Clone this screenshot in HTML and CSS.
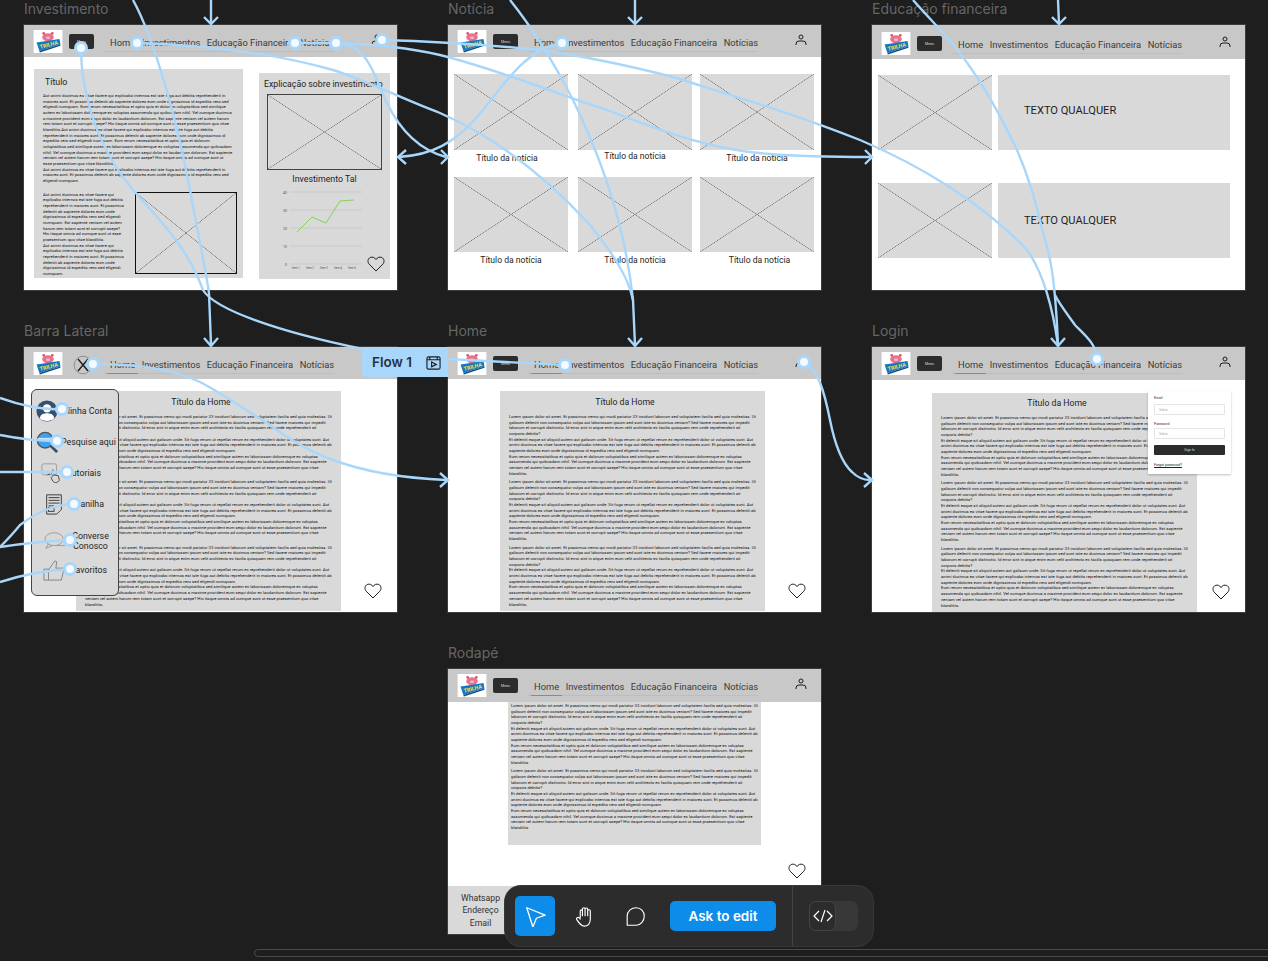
FILE: index.html
```html
<!DOCTYPE html>
<html lang="pt-BR">
<head>
<meta charset="utf-8">
<title>Wireframes</title>
<link rel="stylesheet" href="styles.css">
</head>
<body>
<svg class="defs" width="0" height="0" aria-hidden="true">
  <symbol id="logo" viewBox="0 0 30 24">
    <rect width="30" height="24" fill="#fff"/>
    <ellipse cx="15" cy="7.5" rx="6" ry="4.200" fill="#e8738f"/>
    <circle cx="10.500" cy="3.500" r="1.400" fill="#d9536f"/>
    <circle cx="19.500" cy="3.500" r="1.400" fill="#d9536f"/>
    <ellipse cx="15" cy="8" rx="2.200" ry="1.300" fill="#f7b6c4"/>
    <path d="M3 13 27 9.500 28 15 6 22Z" fill="#1479c4"/>
    <path d="M6 22 28 15 28 16.500 6.500 23.500Z" fill="#0b4c80"/>
    <text x="7" y="19.500" class="logo-text" transform="rotate(-14 7 19.500)">TRILHA</text>
  </symbol>
  <symbol id="user" viewBox="0 0 12 12">
    <circle cx="6" cy="3" r="2" fill="none" stroke="#1e1e1e" stroke-width="1"/>
    <path d="M1 11V10Q1 7 4 7H8Q11 7 11 10V11" fill="none" stroke="#1e1e1e" stroke-width="1"/>
  </symbol>
  <symbol id="heart" viewBox="0 0 18 16">
    <path d="M9 15 2.200 8.200C.2 6 .8 2.600 3.200 1.500 5.400.6 7.800 1.400 9 3.600 10.200 1.400 12.600.6 14.800 1.500 17.200 2.600 17.800 6 15.800 8.200Z" fill="none" stroke="#1e1e1e" stroke-width="1"/>
  </symbol>
</svg>

<main class="canvas">
  <section class="slot">
    <h2 class="slot-name">Investimento</h2>
    <div class="frame">
      <header class="bar">
        <svg class="logo"><use href="#logo"/></svg>
        <button class="menu">Menu</button>
        <nav class="nav"><a>Home</a><a>Investimentos</a><a>Educação Financeira</a><a>Notícias</a></nav>
        <svg class="user"><use href="#user"/></svg>
      </header>
      <div class="inv-body">
        <article class="inv-left">
          <h3 class="inv-title">Título</h3>
          <p class="tiny">Aut animi ducimus ea vitae facere qui explicabo internos est iste fuga aut debitis reprehenderit in maiores sunt. Et possimus deleniti ab sapiente dolores eum unde dignissimos id expedita vero sed eligendi numquam. Eum rerum necessitatibus et optio quis et dolorum voluptatibus sed similique autem ex laboriosam doloremque ex voluptas assumenda qui quibusdam nihil. Vel cumque ducimus a maxime provident eum sequi dolor ex laudantium dolorum. Est sapiente veniam vel autem harum rem totam sunt et corrupti saepe? Hic itaque omnis ad cumque sunt ut esse praesentium quo vitae blanditiis.Aut animi ducimus ea vitae facere qui explicabo internos est iste fuga aut debitis reprehenderit in maiores sunt. Et possimus deleniti ab sapiente dolores eum unde dignissimos id expedita vero sed eligendi numquam. Eum rerum necessitatibus et optio quis et dolorum voluptatibus sed similique autem ex laboriosam doloremque ex voluptas assumenda qui quibusdam nihil. Vel cumque ducimus a maxime provident eum sequi dolor ex laudantium dolorum. Est sapiente veniam vel autem harum rem totam sunt et corrupti saepe? Hic itaque omnis ad cumque sunt ut esse praesentium quo vitae blanditiis.<br>Aut animi ducimus ea vitae facere qui explicabo internos est iste fuga aut debitis reprehenderit in maiores sunt. Et possimus deleniti ab sapiente dolores eum unde dignissimos id expedita vero sed eligendi numquam.</p>
          <div class="inv-split">
            <p class="tiny inv-col">Aut animi ducimus ea vitae facere qui explicabo internos est iste fuga aut debitis reprehenderit in maiores sunt. Et possimus deleniti ab sapiente dolores eum unde dignissimos id expedita vero sed eligendi numquam. Est sapiente veniam vel autem harum rem totam sunt et corrupti saepe? Hic itaque omnis ad cumque sunt ut esse praesentium quo vitae blanditiis.<br>Aut animi ducimus ea vitae facere qui explicabo internos est iste fuga aut debitis reprehenderit in maiores sunt. Et possimus deleniti ab sapiente dolores eum unde dignissimos id expedita vero sed eligendi numquam.</p>
            <div class="ph inv-img"></div>
          </div>
        </article>
        <aside class="inv-right">
          <h3 class="inv-sub">Explicação sobre investimento</h3>
          <div class="ph inv-pic"></div>
          <h3 class="inv-chart-title">Investimento Tal</h3>
          <svg class="chart" viewBox="0 0 131 90">
            <g class="grid"><path d="M31 3H103M31 21H103M31 39H103M31 57H103M31 75H103"/></g>
            <g class="axis">
              <text x="28" y="4.500">40</text><text x="28" y="22.500">30</text><text x="28" y="40.500">20</text><text x="28" y="58.500">10</text><text x="28" y="76.500">0</text>
            </g>
            <g class="ticks">
              <text x="33" y="80">Item 1</text><text x="47" y="80">Item 2</text><text x="61" y="80">Item 3</text><text x="75" y="80">Item 4</text><text x="89" y="80">Item 5</text>
            </g>
            <path class="series" d="M38 43 53 28 67 34 81 12 95 11"/>
          </svg>
        </aside>
      </div>
      <svg class="heart heart-inv"><use href="#heart"/></svg>
    </div>
  </section>

  <section class="slot">
    <h2 class="slot-name">Notícia</h2>
    <div class="frame">
      <header class="bar">
        <svg class="logo"><use href="#logo"/></svg>
        <button class="menu">Menu</button>
        <nav class="nav"><a>Home</a><a>Investimentos</a><a>Educação Financeira</a><a>Notícias</a></nav>
        <svg class="user"><use href="#user"/></svg>
      </header>
      <div class="news">
        <figure class="card"><div class="ph news-img"></div><figcaption class="cap cap-left">Título da notícia</figcaption></figure>
        <figure class="card"><div class="ph news-img"></div><figcaption class="cap cap-up">Título da notícia</figcaption></figure>
        <figure class="card"><div class="ph news-img"></div><figcaption class="cap">Título da notícia</figcaption></figure>
        <figure class="card"><div class="ph news-img news-img-short"></div><figcaption class="cap">Título da notícia</figcaption></figure>
        <figure class="card"><div class="ph news-img news-img-short"></div><figcaption class="cap">Título da notícia</figcaption></figure>
        <figure class="card"><div class="ph news-img news-img-short"></div><figcaption class="cap cap-right">Título da notícia</figcaption></figure>
      </div>
    </div>
  </section>

  <section class="slot">
    <h2 class="slot-name">Educação financeira</h2>
    <div class="frame">
      <header class="bar bar-low">
        <svg class="logo"><use href="#logo"/></svg>
        <button class="menu">Menu</button>
        <nav class="nav"><a>Home</a><a>Investimentos</a><a>Educação Financeira</a><a>Notícias</a></nav>
        <svg class="user"><use href="#user"/></svg>
      </header>
      <div class="edu">
        <div class="ph edu-img"></div><div class="edu-text edu-text-high">TEXTO QUALQUER</div>
        <div class="ph edu-img"></div><div class="edu-text">TEXTO QUALQUER</div>
      </div>
    </div>
  </section>

  <section class="slot">
    <h2 class="slot-name">Barra Lateral</h2>
    <div class="frame">
      <header class="bar">
        <svg class="logo"><use href="#logo"/></svg>
        <svg class="close" viewBox="0 0 20 20"><circle cx="10" cy="10" r="8.800"/><path d="M5 4 15 16M15 4 5 16"/></svg>
        <nav class="nav nav-after-close"><a class="on">Home</a><a>Investimentos</a><a>Educação Financeira</a><a>Notícias</a></nav>
      </header>
      <article class="page">
        <h3 class="page-title">Título da Home</h3>
        <p class="tiny para">Lorem ipsum dolor sit amet. Et possimus nemo qui modi pariatur 33 incidunt laborum sed voluptatem facilis sed quia molestias. Ut galisum deleniti non consequatur culpa aut laboriosam ipsum sed sunt iste ex ducimus veniam? Sed facere maiores qui impedit laborum et corrupti distinctio. Id error sint in atque enim eum velit architecto ex facilis quisquam rem unde reprehenderit sit corporis debitis?<br>Et deleniti eaque sit aliquid autem aut galisum unde. Sit fuga rerum ut repellat rerum ex reprehenderit dolor ut voluptates sunt. Aut animi ducimus ea vitae facere qui explicabo internos est iste fuga aut debitis reprehenderit in maiores sunt. Et possimus deleniti ab sapiente dolores eum unde dignissimos id expedita vero sed eligendi numquam.<br>Eum rerum necessitatibus et optio quis et dolorum voluptatibus sed similique autem ex laboriosam doloremque ex voluptas assumenda qui quibusdam nihil. Vel cumque ducimus a maxime provident eum sequi dolor ex laudantium dolorum. Est sapiente veniam vel autem harum rem totam sunt et corrupti saepe? Hic itaque omnis ad cumque sunt ut esse praesentium quo vitae blanditiis.</p>
        <p class="tiny para">Lorem ipsum dolor sit amet. Et possimus nemo qui modi pariatur 33 incidunt laborum sed voluptatem facilis sed quia molestias. Ut galisum deleniti non consequatur culpa aut laboriosam ipsum sed sunt iste ex ducimus veniam? Sed facere maiores qui impedit laborum et corrupti distinctio. Id error sint in atque enim eum velit architecto ex facilis quisquam rem unde reprehenderit sit corporis debitis?<br>Et deleniti eaque sit aliquid autem aut galisum unde. Sit fuga rerum ut repellat rerum ex reprehenderit dolor ut voluptates sunt. Aut animi ducimus ea vitae facere qui explicabo internos est iste fuga aut debitis reprehenderit in maiores sunt. Et possimus deleniti ab sapiente dolores eum unde dignissimos id expedita vero sed eligendi numquam.<br>Eum rerum necessitatibus et optio quis et dolorum voluptatibus sed similique autem ex laboriosam doloremque ex voluptas assumenda qui quibusdam nihil. Vel cumque ducimus a maxime provident eum sequi dolor ex laudantium dolorum. Est sapiente veniam vel autem harum rem totam sunt et corrupti saepe? Hic itaque omnis ad cumque sunt ut esse praesentium quo vitae blanditiis.</p>
        <p class="tiny para">Lorem ipsum dolor sit amet. Et possimus nemo qui modi pariatur 33 incidunt laborum sed voluptatem facilis sed quia molestias. Ut galisum deleniti non consequatur culpa aut laboriosam ipsum sed sunt iste ex ducimus veniam? Sed facere maiores qui impedit laborum et corrupti distinctio. Id error sint in atque enim eum velit architecto ex facilis quisquam rem unde reprehenderit sit corporis debitis?<br>Et deleniti eaque sit aliquid autem aut galisum unde. Sit fuga rerum ut repellat rerum ex reprehenderit dolor ut voluptates sunt. Aut animi ducimus ea vitae facere qui explicabo internos est iste fuga aut debitis reprehenderit in maiores sunt. Et possimus deleniti ab sapiente dolores eum unde dignissimos id expedita vero sed eligendi numquam.<br>Eum rerum necessitatibus et optio quis et dolorum voluptatibus sed similique autem ex laboriosam doloremque ex voluptas assumenda qui quibusdam nihil. Vel cumque ducimus a maxime provident eum sequi dolor ex laudantium dolorum. Est sapiente veniam vel autem harum rem totam sunt et corrupti saepe? Hic itaque omnis ad cumque sunt ut esse praesentium quo vitae blanditiis.</p>
      </article>
      <svg class="heart heart-page"><use href="#heart"/></svg>
      <aside class="side">
        <div class="side-row">
          <svg class="side-ico" viewBox="0 0 24 24"><circle cx="12" cy="12" r="11.500" fill="#36506f"/><circle cx="12" cy="9" r="4.500" fill="#fff"/><path d="M4 20C5 15 9 14.500 12 14.500S19 15 20 20C16 24 8 24 4 20Z" fill="#fff"/></svg>
          <span class="side-label">Minha Conta</span>
        </div>
        <div class="side-row">
          <svg class="side-ico" viewBox="0 0 24 24"><circle cx="10" cy="10" r="8.500" fill="#3ea2f2" stroke="#555" stroke-width="1.500"/><path d="M2 9H18" stroke="#cfe9ff" stroke-width="3"/><path d="M16 16 23 23" stroke="#36506f" stroke-width="3"/></svg>
          <span class="side-label">Pesquise aqui</span>
        </div>
        <div class="side-row side-row-short">
          <svg class="side-ico" viewBox="0 0 24 24" fill="none" stroke="#888" stroke-width=".8"><rect x="1" y="2" width="16" height="12" rx="2"/><path d="M9 10 12 13M13 8V11M7 14 10 13" stroke="#222"/><path d="M14 14 19 15 20 20C18 23 15 23 13 21L11 17Z" stroke="#222"/></svg>
          <span class="side-label">Tutoriais</span>
        </div>
        <div class="side-row side-row-mid">
          <svg class="side-ico" viewBox="0 0 24 24" fill="none" stroke="#333" stroke-width="1"><path d="M4 2H20V18L15 23H4Z"/><path d="M6 5H18M6 8H18M6 11H18M6 14H12"/><rect x="6" y="16" width="6" height="4"/></svg>
          <span class="side-label">Planilha</span>
        </div>
        <div class="side-row side-row-two">
          <svg class="side-ico" viewBox="0 0 24 24" fill="none" stroke="#888" stroke-width=".8"><ellipse cx="11" cy="10" rx="10" ry="7"/><path d="M5 15 2 20 9 17M14 17H23"/></svg>
          <span class="side-label">Converse<br>Conosco</span>
        </div>
        <div class="side-row side-row-fav">
          <svg class="side-ico" viewBox="0 0 24 24" fill="none" stroke="#777" stroke-width=".9"><path d="M1 11H6V23H1ZM6 12 13 2 15 3 14 10H23L20 23H6"/></svg>
          <span class="side-label">Favoritos</span>
        </div>
      </aside>
    </div>
  </section>

  <section class="slot">
    <h2 class="slot-name">Home</h2>
    <div class="frame">
      <header class="bar">
        <svg class="logo"><use href="#logo"/></svg>
        <button class="menu">Menu</button>
        <nav class="nav"><a class="on">Home</a><a>Investimentos</a><a>Educação Financeira</a><a>Notícias</a></nav>
        <svg class="user"><use href="#user"/></svg>
      </header>
      <article class="page">
        <h3 class="page-title">Título da Home</h3>
        <p class="tiny para">Lorem ipsum dolor sit amet. Et possimus nemo qui modi pariatur 33 incidunt laborum sed voluptatem facilis sed quia molestias. Ut galisum deleniti non consequatur culpa aut laboriosam ipsum sed sunt iste ex ducimus veniam? Sed facere maiores qui impedit laborum et corrupti distinctio. Id error sint in atque enim eum velit architecto ex facilis quisquam rem unde reprehenderit sit corporis debitis?<br>Et deleniti eaque sit aliquid autem aut galisum unde. Sit fuga rerum ut repellat rerum ex reprehenderit dolor ut voluptates sunt. Aut animi ducimus ea vitae facere qui explicabo internos est iste fuga aut debitis reprehenderit in maiores sunt. Et possimus deleniti ab sapiente dolores eum unde dignissimos id expedita vero sed eligendi numquam.<br>Eum rerum necessitatibus et optio quis et dolorum voluptatibus sed similique autem ex laboriosam doloremque ex voluptas assumenda qui quibusdam nihil. Vel cumque ducimus a maxime provident eum sequi dolor ex laudantium dolorum. Est sapiente veniam vel autem harum rem totam sunt et corrupti saepe? Hic itaque omnis ad cumque sunt ut esse praesentium quo vitae blanditiis.</p>
        <p class="tiny para">Lorem ipsum dolor sit amet. Et possimus nemo qui modi pariatur 33 incidunt laborum sed voluptatem facilis sed quia molestias. Ut galisum deleniti non consequatur culpa aut laboriosam ipsum sed sunt iste ex ducimus veniam? Sed facere maiores qui impedit laborum et corrupti distinctio. Id error sint in atque enim eum velit architecto ex facilis quisquam rem unde reprehenderit sit corporis debitis?<br>Et deleniti eaque sit aliquid autem aut galisum unde. Sit fuga rerum ut repellat rerum ex reprehenderit dolor ut voluptates sunt. Aut animi ducimus ea vitae facere qui explicabo internos est iste fuga aut debitis reprehenderit in maiores sunt. Et possimus deleniti ab sapiente dolores eum unde dignissimos id expedita vero sed eligendi numquam.<br>Eum rerum necessitatibus et optio quis et dolorum voluptatibus sed similique autem ex laboriosam doloremque ex voluptas assumenda qui quibusdam nihil. Vel cumque ducimus a maxime provident eum sequi dolor ex laudantium dolorum. Est sapiente veniam vel autem harum rem totam sunt et corrupti saepe? Hic itaque omnis ad cumque sunt ut esse praesentium quo vitae blanditiis.</p>
        <p class="tiny para">Lorem ipsum dolor sit amet. Et possimus nemo qui modi pariatur 33 incidunt laborum sed voluptatem facilis sed quia molestias. Ut galisum deleniti non consequatur culpa aut laboriosam ipsum sed sunt iste ex ducimus veniam? Sed facere maiores qui impedit laborum et corrupti distinctio. Id error sint in atque enim eum velit architecto ex facilis quisquam rem unde reprehenderit sit corporis debitis?<br>Et deleniti eaque sit aliquid autem aut galisum unde. Sit fuga rerum ut repellat rerum ex reprehenderit dolor ut voluptates sunt. Aut animi ducimus ea vitae facere qui explicabo internos est iste fuga aut debitis reprehenderit in maiores sunt. Et possimus deleniti ab sapiente dolores eum unde dignissimos id expedita vero sed eligendi numquam.<br>Eum rerum necessitatibus et optio quis et dolorum voluptatibus sed similique autem ex laboriosam doloremque ex voluptas assumenda qui quibusdam nihil. Vel cumque ducimus a maxime provident eum sequi dolor ex laudantium dolorum. Est sapiente veniam vel autem harum rem totam sunt et corrupti saepe? Hic itaque omnis ad cumque sunt ut esse praesentium quo vitae blanditiis.</p>
      </article>
      <svg class="heart heart-page"><use href="#heart"/></svg>
    </div>
  </section>

  <section class="slot">
    <h2 class="slot-name">Login</h2>
    <div class="frame">
      <header class="bar bar-tall">
        <svg class="logo"><use href="#logo"/></svg>
        <button class="menu">Menu</button>
        <nav class="nav"><a class="on">Home</a><a>Investimentos</a><a>Educação Financeira</a><a>Notícias</a></nav>
        <svg class="user"><use href="#user"/></svg>
      </header>
      <article class="page page-login">
        <h3 class="page-title">Título da Home</h3>
        <p class="tiny para">Lorem ipsum dolor sit amet. Et possimus nemo qui modi pariatur 33 incidunt laborum sed voluptatem facilis sed quia molestias. Ut galisum deleniti non consequatur culpa aut laboriosam ipsum sed sunt iste ex ducimus veniam? Sed facere maiores qui impedit laborum et corrupti distinctio. Id error sint in atque enim eum velit architecto ex facilis quisquam rem unde reprehenderit sit corporis debitis?<br>Et deleniti eaque sit aliquid autem aut galisum unde. Sit fuga rerum ut repellat rerum ex reprehenderit dolor ut voluptates sunt. Aut animi ducimus ea vitae facere qui explicabo internos est iste fuga aut debitis reprehenderit in maiores sunt. Et possimus deleniti ab sapiente dolores eum unde dignissimos id expedita vero sed eligendi numquam.<br>Eum rerum necessitatibus et optio quis et dolorum voluptatibus sed similique autem ex laboriosam doloremque ex voluptas assumenda qui quibusdam nihil. Vel cumque ducimus a maxime provident eum sequi dolor ex laudantium dolorum. Est sapiente veniam vel autem harum rem totam sunt et corrupti saepe? Hic itaque omnis ad cumque sunt ut esse praesentium quo vitae blanditiis.</p>
        <p class="tiny para">Lorem ipsum dolor sit amet. Et possimus nemo qui modi pariatur 33 incidunt laborum sed voluptatem facilis sed quia molestias. Ut galisum deleniti non consequatur culpa aut laboriosam ipsum sed sunt iste ex ducimus veniam? Sed facere maiores qui impedit laborum et corrupti distinctio. Id error sint in atque enim eum velit architecto ex facilis quisquam rem unde reprehenderit sit corporis debitis?<br>Et deleniti eaque sit aliquid autem aut galisum unde. Sit fuga rerum ut repellat rerum ex reprehenderit dolor ut voluptates sunt. Aut animi ducimus ea vitae facere qui explicabo internos est iste fuga aut debitis reprehenderit in maiores sunt. Et possimus deleniti ab sapiente dolores eum unde dignissimos id expedita vero sed eligendi numquam.<br>Eum rerum necessitatibus et optio quis et dolorum voluptatibus sed similique autem ex laboriosam doloremque ex voluptas assumenda qui quibusdam nihil. Vel cumque ducimus a maxime provident eum sequi dolor ex laudantium dolorum. Est sapiente veniam vel autem harum rem totam sunt et corrupti saepe? Hic itaque omnis ad cumque sunt ut esse praesentium quo vitae blanditiis.</p>
        <p class="tiny para">Lorem ipsum dolor sit amet. Et possimus nemo qui modi pariatur 33 incidunt laborum sed voluptatem facilis sed quia molestias. Ut galisum deleniti non consequatur culpa aut laboriosam ipsum sed sunt iste ex ducimus veniam? Sed facere maiores qui impedit laborum et corrupti distinctio. Id error sint in atque enim eum velit architecto ex facilis quisquam rem unde reprehenderit sit corporis debitis?<br>Et deleniti eaque sit aliquid autem aut galisum unde. Sit fuga rerum ut repellat rerum ex reprehenderit dolor ut voluptates sunt. Aut animi ducimus ea vitae facere qui explicabo internos est iste fuga aut debitis reprehenderit in maiores sunt. Et possimus deleniti ab sapiente dolores eum unde dignissimos id expedita vero sed eligendi numquam.<br>Eum rerum necessitatibus et optio quis et dolorum voluptatibus sed similique autem ex laboriosam doloremque ex voluptas assumenda qui quibusdam nihil. Vel cumque ducimus a maxime provident eum sequi dolor ex laudantium dolorum. Est sapiente veniam vel autem harum rem totam sunt et corrupti saepe? Hic itaque omnis ad cumque sunt ut esse praesentium quo vitae blanditiis.</p>
      </article>
      <form class="login">
        <label class="login-label">Email</label>
        <div class="login-input">Value</div>
        <label class="login-label login-label-next">Password</label>
        <div class="login-input">Value</div>
        <div class="login-btn">Sign In</div>
        <a class="login-link">Forgot password?</a>
      </form>
      <svg class="heart heart-login"><use href="#heart"/></svg>
    </div>
  </section>

  <section class="slot slot-footer">
    <h2 class="slot-name">Rodapé</h2>
    <div class="frame">
      <header class="bar bar-tall">
        <svg class="logo"><use href="#logo"/></svg>
        <button class="menu">Menu</button>
        <nav class="nav"><a class="on">Home</a><a>Investimentos</a><a>Educação Financeira</a><a>Notícias</a></nav>
        <svg class="user"><use href="#user"/></svg>
      </header>
      <article class="page-foot">
        <p class="tiny para">Lorem ipsum dolor sit amet. Et possimus nemo qui modi pariatur 33 incidunt laborum sed voluptatem facilis sed quia molestias. Ut galisum deleniti non consequatur culpa aut laboriosam ipsum sed sunt iste ex ducimus veniam? Sed facere maiores qui impedit laborum et corrupti distinctio. Id error sint in atque enim eum velit architecto ex facilis quisquam rem unde reprehenderit sit corporis debitis?<br>Et deleniti eaque sit aliquid autem aut galisum unde. Sit fuga rerum ut repellat rerum ex reprehenderit dolor ut voluptates sunt. Aut animi ducimus ea vitae facere qui explicabo internos est iste fuga aut debitis reprehenderit in maiores sunt. Et possimus deleniti ab sapiente dolores eum unde dignissimos id expedita vero sed eligendi numquam.<br>Eum rerum necessitatibus et optio quis et dolorum voluptatibus sed similique autem ex laboriosam doloremque ex voluptas assumenda qui quibusdam nihil. Vel cumque ducimus a maxime provident eum sequi dolor ex laudantium dolorum. Est sapiente veniam vel autem harum rem totam sunt et corrupti saepe? Hic itaque omnis ad cumque sunt ut esse praesentium quo vitae blanditiis.</p>
        <p class="tiny para">Lorem ipsum dolor sit amet. Et possimus nemo qui modi pariatur 33 incidunt laborum sed voluptatem facilis sed quia molestias. Ut galisum deleniti non consequatur culpa aut laboriosam ipsum sed sunt iste ex ducimus veniam? Sed facere maiores qui impedit laborum et corrupti distinctio. Id error sint in atque enim eum velit architecto ex facilis quisquam rem unde reprehenderit sit corporis debitis?<br>Et deleniti eaque sit aliquid autem aut galisum unde. Sit fuga rerum ut repellat rerum ex reprehenderit dolor ut voluptates sunt. Aut animi ducimus ea vitae facere qui explicabo internos est iste fuga aut debitis reprehenderit in maiores sunt. Et possimus deleniti ab sapiente dolores eum unde dignissimos id expedita vero sed eligendi numquam.<br>Eum rerum necessitatibus et optio quis et dolorum voluptatibus sed similique autem ex laboriosam doloremque ex voluptas assumenda qui quibusdam nihil. Vel cumque ducimus a maxime provident eum sequi dolor ex laudantium dolorum. Est sapiente veniam vel autem harum rem totam sunt et corrupti saepe? Hic itaque omnis ad cumque sunt ut esse praesentium quo vitae blanditiis.</p>
      </article>
      <svg class="heart heart-foot"><use href="#heart"/></svg>
      <footer class="foot"><div class="foot-list">Whatsapp<br>Endereço<br>Email</div></footer>
    </div>
  </section>
</main>

<svg class="wires" viewBox="0 0 1268 961" aria-hidden="true">
  <g class="wire">
    <path d="M133 0C155 40 178 125 190 190 198 235 205 265 209 293L211 345"/>
    <path d="M204 338 211 346 218 338"/>
    <path d="M81 48C81 90 95 140 125 180 150 212 185 240 203 290 215 310 280 332 363 349L448 359 565 365"/>
    <path d="M137 43C200 45 270 52 333 70 370 82 400 98 440 113 490 135 540 170 590 225 610 250 628 275 633 300L635 345"/>
    <path d="M628 338 635 346 642 338"/>
    <path d="M510 0C530 25 550 55 573 100 600 155 625 225 633 300"/>
    <path d="M382 40C420 41 480 44 540 50 590 57 630 66 673 77 730 95 790 112 860 140 920 165 985 205 1027 250 1045 275 1053 310 1058 345"/>
    <path d="M913 0C935 25 952 40 970 67 990 95 1005 125 1017 150 1030 180 1037 205 1043 233 1050 255 1055 275 1058 345"/>
    <path d="M1051 338 1058 346 1065 338"/>
    <path d="M295 43 336 43"/>
    <path d="M336 43C370 44 410 48 440 55 500 70 560 95 607 110 660 130 710 150 770 154 805 157 840 157 870 157"/>
    <path d="M865 150 872 157 865 164"/>
    <path d="M336 43C370 44 375 80 387 103 400 130 420 150 446 157"/>
    <path d="M441 150 448 157 441 164"/>
    <path d="M562 43C530 48 510 75 483 110 455 145 430 155 399 157"/>
    <path d="M406 150 398 157 406 164"/>
    <path d="M211 0V24M204 17 211 24 218 17"/>
    <path d="M635 0V24M628 17 635 24 642 17"/>
    <path d="M1058 0 1059 24M1052 17 1059 24 1066 17"/>
    <path d="M1097 359C1097 345 1085 335 1075 325 1068 315 1060 305 1055 295"/>
    <path d="M93 364C120 364 165 365 200 382 225 395 245 410 267 423 290 440 310 452 333 460 360 470 400 478 446 480"/>
    <path d="M440 473 448 480 440 487"/>
    <path d="M804 362C818 370 824 390 830 420 835 445 842 463 852 472 858 478 865 480 870 480"/>
    <path d="M864 473 872 480 864 487"/>
    <path d="M62 409C45 410 25 407 0 398"/>
    <path d="M57 441C35 441 15 438 0 435"/>
    <path d="M67 472H0"/>
    <path d="M74 504C55 505 40 510 20 525 12 535 5 542 0 547"/>
    <path d="M70 540C45 541 20 544 0 547"/>
    <path d="M70 569C50 570 25 574 0 582"/>
  </g>
  <g class="node">
    <circle cx="81" cy="48" r="5.500"/><circle cx="137" cy="43" r="5.500"/><circle cx="295" cy="43" r="5.500"/><circle cx="336" cy="43" r="5.500"/><circle cx="382" cy="40" r="5.500"/><circle cx="562" cy="43" r="5.500"/><circle cx="93" cy="364" r="5.500"/><circle cx="565" cy="365" r="5.500"/><circle cx="804" cy="362" r="5.500"/><circle cx="1097" cy="359" r="5.500"/><circle cx="62" cy="409" r="5.500"/><circle cx="57" cy="441" r="5.500"/><circle cx="67" cy="472" r="5.500"/><circle cx="74" cy="504" r="5.500"/><circle cx="70" cy="540" r="5.500"/><circle cx="70" cy="569" r="5.500"/>
  </g>
</svg>

<div class="flow">
  <span class="flow-name">Flow 1</span>
  <svg class="flow-ico" viewBox="0 0 16 16" fill="none" stroke="#1e1e1e" stroke-width="1.200"><rect x="1" y="2" width="14" height="13" rx="1.500"/><path d="M1 5H15M4 2V5M12 2V5"/><path d="M6 7.500 11 10 6 12.500Z"/></svg>
</div>

<div class="tools">
  <button class="tool tool-on">
    <svg viewBox="0 0 24 24" fill="none" stroke="#fff" stroke-width="1.500" stroke-linejoin="round"><path d="M2 2 23 10.500 13 14 9 24Z"/></svg>
  </button>
  <button class="tool">
    <svg viewBox="0 0 24 24" fill="none" stroke="#fff" stroke-width="1.300" stroke-linecap="round" stroke-linejoin="round"><path d="M6 13V6C6 4 8.500 4 8.500 6V11M8.500 11V3.500C8.500 1.500 11.500 1.500 11.500 3.500V11M11.500 11V3.500C11.500 1.800 14.500 1.800 14.500 3.500V11M14.500 11V5.500C14.500 3.800 17.500 3.800 17.500 5.500V15C17.500 20 14.500 23 11 23 7 23 5 20 2 15.500 1 14 3.200 12 5 13.500L6 15"/></svg>
  </button>
  <button class="tool">
    <svg viewBox="0 0 24 24" fill="none" stroke="#fff" stroke-width="1.300" stroke-linejoin="round"><path d="M13 2C18 2 22 6 22 11.500S18 22 13 22H2.500V11.500C2.500 6 7 2 13 2Z"/></svg>
  </button>
  <button class="ask">Ask to edit</button>
  <div class="tool-sep"></div>
  <div class="toggle">
    <div class="toggle-knob">
      <svg viewBox="0 0 20 14" fill="none" stroke="#fff" stroke-width="1.200" stroke-linejoin="round"><path d="M6 2 1 7 6 12M14 2 19 7 14 12M12 1 8 13"/></svg>
    </div>
  </div>
</div>
<div class="scroll"></div>
</body>
</html>
```

FILE: styles.css
```css
* { box-sizing: border-box; }
html, body { margin: 0; height: 961px; overflow: hidden; background: #1e1e1e; }
body { position: relative; font-family: Inter, "Liberation Sans", sans-serif; color: #1e1e1e; }
h2, h3, p, figure { margin: 0; font-weight: 400; }
.defs { position: absolute; }
.logo-text { font: 800 5.500px Roboto, sans-serif; fill: #ffd83a; }

.canvas {
  display: grid;
  grid-template-columns: repeat(3, 373px);
  grid-auto-rows: 322px;
  column-gap: 51px;
  padding-left: 24px;
}
.slot-footer { grid-column: 2; }
.slot-name { height: 25px; font-size: 14px; line-height: 18px; color: #666; }

.frame { position: relative; width: 373px; height: 265px; background: #fff; box-shadow: 0 0 0 1px #3c3c3c; overflow: hidden; font-family: Roboto, "Liberation Sans", sans-serif; }

.bar { display: flex; align-items: flex-start; height: 32px; padding: 5px 0 0 9px; background: #c8c8c8; }
.bar-low { height: 34px; padding-top: 7px; }
.bar-tall { height: 33px; }
.logo { width: 30px; height: 23px; flex: none; }
.menu { width: 25px; height: 15px; margin: 4px 0 0 6px; padding: 0; border: 0; border-radius: 2px; background: #2c2c2c; color: #ddd; font: 3.500px Roboto, sans-serif; flex: none; }
.close { width: 20px; height: 20px; margin: 3px 0 0 10px; flex: none; fill: none; stroke: #1e1e1e; }
.close circle { stroke: #777; stroke-width: .7; }
.close path { stroke-width: 1.400; }
.nav { display: flex; gap: 6.500px; width: 230px; height: 22px; margin-left: 10px; padding: 6px 0 0 6px; border-bottom: 1px solid #bdbdbd; font-size: 9.350px; line-height: 14px; color: #3a3a3a; flex: none; }
.nav-after-close { margin-left: 11px; }
.nav a { white-space: nowrap; height: 21px; }
.nav a.on { position: relative; }
.nav a.on::after { content: ""; position: absolute; left: -3px; right: -3px; bottom: 5px; height: 1px; background: #8a8a8a; }
.user { width: 12px; height: 12px; margin: 4px 0 0 37px; flex: none; }

.ph {
  background:
    linear-gradient(to top right, transparent calc(50% - .5px), #777 50%, transparent calc(50% + .5px)),
    linear-gradient(to bottom right, transparent calc(50% - .5px), #777 50%, transparent calc(50% + .5px)),
    #d9d9d9;
}
.tiny { font-size: 4.250px; line-height: 5.670px; color: #111; }

.heart { position: absolute; width: 18px; height: 16px; }
.heart-inv { left: 343px; top: 231px; }
.heart-page { left: 340px; top: 236px; }
.heart-login { left: 340px; top: 237px; }
.heart-foot { left: 340px; top: 194px; }

/* Investimento */
.inv-body { display: flex; align-items: flex-start; gap: 16px; padding: 12px 0 0 10px; }
.inv-left { width: 209px; height: 209px; padding: 7px 10px 0 9px; background: #d9d9d9; }
.inv-title { padding-left: 2px; font-size: 8.800px; line-height: 12px; margin-bottom: 5px; }
.inv-split { display: flex; gap: 8px; margin-top: 8px; }
.inv-col { width: 84px; flex: none; }
.inv-img { width: 102px; height: 82px; border: 1px solid #111; flex: none; }
.inv-right { width: 131px; height: 206px; margin-top: 4px; padding-top: 5px; background: #d9d9d9; }
.inv-sub { padding-left: 5px; font-size: 8.750px; line-height: 12px; white-space: nowrap; }
.inv-pic { width: 115px; height: 76px; margin: 4px 0 0 8px; border: 1px solid #444; }
.inv-chart-title { margin-top: 4px; font-size: 8.800px; line-height: 11px; text-align: center; }
.chart { display: block; width: 131px; height: 90px; margin-top: 4px; }
.grid path { fill: none; stroke: #c0c0c0; stroke-width: .6; }
.axis text { font: 3.500px Roboto, sans-serif; fill: #555; text-anchor: end; }
.ticks text { font: 2.800px Roboto, sans-serif; fill: #555; }
.series { fill: none; stroke: #7fd65a; stroke-width: 1; }

/* Notícia */
.news { display: grid; grid-template-columns: 124px 122px 114px; grid-auto-rows: 103px; padding: 17px 0 0 6px; }
.card { width: 114px; }
.news-img { height: 76px; }
.news-img-short { height: 75px; }
.cap { padding-top: 1px; font-size: 8.600px; line-height: 14px; text-align: center; }
.cap-left { padding-right: 8px; }
.cap-up { margin-top: -2px; }
.cap-right { padding-left: 5px; }

/* Educação */
.edu { display: grid; grid-template-columns: 114px 232px; grid-auto-rows: 75px; column-gap: 6px; row-gap: 33px; padding: 16px 0 0 6px; }
.edu-text { display: flex; align-items: center; padding-left: 26px; background: #d9d9d9; font-size: 11.100px; }
.edu-text-high { padding-bottom: 5px; }

/* Home pages */
.page { width: 265px; height: 220px; margin: 12px 0 0 52px; padding: 5px 8px 0 9px; background: #d9d9d9; }
.page-login { margin: 13px 0 0 60px; padding-top: 4px; }
.page-title { padding-right: 16px; font-size: 8.700px; line-height: 12px; margin-bottom: 6px; text-align: center; }
.para { margin-bottom: 3px; }

/* Sidebar */
.side { position: absolute; left: 7px; top: 42px; width: 88px; height: 207px; padding: 5px 6px 0 4px; border: 1.500px solid #444; border-radius: 6px; background: #d9d9d9; }
.side-row { display: flex; align-items: center; height: 31px; gap: 3px; }
.side-row-short .side-ico { margin-left: 5px; }
.side-row-mid .side-ico { margin-left: 7px; }
.side-row-two { margin-top: 6px; }
.side-row-two .side-ico { margin-left: 8px; }
.side-row-fav { margin-top: -2px; }
.side-row-fav .side-ico { margin-left: 7px; }
.side-row-short .side-label { margin-right: 11px; }
.side-row-mid .side-label { margin-right: 8px; }
.side-row-fav .side-label { margin-right: 5px; }
.side-ico { width: 22px; height: 22px; flex: none; }
.side-label { flex: 1; font-size: 8.800px; line-height: 10px; text-align: right; white-space: nowrap; }
.side-row-two .side-label { text-align: center; }

/* Login */
.login { position: absolute; left: 276px; top: 44px; width: 83px; height: 83px; padding: 5px 6px 0; background: #fff; box-shadow: 0 1px 2px rgba(0,0,0,.25); font-size: 3.500px; }
.login-label { display: block; line-height: 5px; color: #333; }
.login-label-next { margin: 7px 0 -2px; }
.login-input { height: 11px; margin-top: 3px; padding: 3px 4px; border: 1px solid #e4e4e4; border-radius: 1px; color: #aaa; }
.login-btn { height: 10px; margin-top: 6px; border-radius: 1px; background: #2c2c2c; color: #ddd; line-height: 10px; text-align: center; }
.login-link { display: block; margin-top: 8px; color: #222; text-decoration: underline; }

/* Rodapé */
.page-foot { width: 253px; height: 143px; margin-left: 60px; padding: 1px 2px 0 3px; background: #d9d9d9; }
.foot { position: absolute; left: 0; right: 0; bottom: 0; height: 48px; padding: 6px 0 0 12px; background: #d9d9d9; font-size: 8.700px; line-height: 12.300px; color: #333; }
.foot-list { width: 41px; text-align: center; }

/* Overlays */
.wires { position: absolute; left: 0; top: 0; width: 1268px; height: 961px; pointer-events: none; }
.wire path { fill: none; stroke: #a8d7fb; stroke-width: 2.400; }
.node circle { fill: #f4faff; stroke: #a8d7fb; stroke-width: 3; }

.flow { position: absolute; left: 362px; top: 347px; display: flex; align-items: center; gap: 14px; width: 86px; height: 30px; padding: 0 7px 0 10px; border-radius: 4px 0 0 4px; background: #a8d7fb; }
.flow-name { font-size: 13.500px; font-weight: 600; color: #24333f; white-space: nowrap; }
.flow-ico { width: 15px; height: 15px; flex: none; }

.tools { position: absolute; left: 505px; top: 886px; display: flex; align-items: center; width: 368px; height: 60px; padding-left: 10px; border-radius: 16px; background: #2c2c2c; box-shadow: 0 0 0 1px #383838; }
.tool { display: flex; align-items: center; justify-content: center; width: 40px; height: 40px; margin-right: 10px; padding: 0; border: 0; border-radius: 5px; background: none; flex: none; }
.tool svg { width: 21px; height: 21px; }
.tool-on { background: #0d8ce9; }
.ask { width: 106px; height: 30px; margin-left: 5px; padding: 0; border: 0; border-radius: 5px; background: #0d8ce9; color: #fff; font: 600 13.500px Inter, sans-serif; flex: none; }
.tool-sep { align-self: stretch; width: 1px; margin-left: 16px; background: #444; flex: none; }
.toggle { width: 49px; height: 30px; margin-left: 16px; border-radius: 7px; background: #383838; flex: none; }
.toggle-knob { display: flex; align-items: center; justify-content: center; width: 27px; height: 30px; border: 1px solid #444; border-radius: 7px; background: #2c2c2c; }
.toggle-knob svg { width: 20px; height: 14px; }
.scroll { position: absolute; left: 254px; right: -10px; top: 949px; height: 8px; border: 1px solid #4a4a4a; border-radius: 4px; }
```
